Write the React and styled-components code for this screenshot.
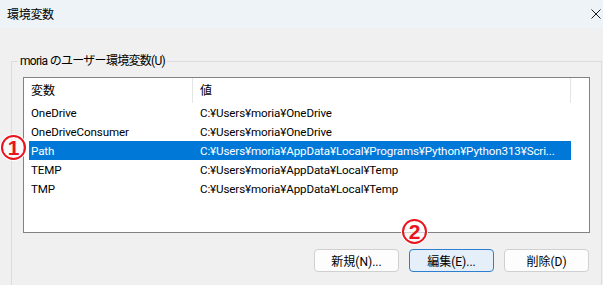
import styled, { createGlobalStyle } from 'styled-components'

const GlobalStyle = createGlobalStyle`
  html, body {
    margin: 0;
    padding: 0;
    background: #f0f0f0;
    overflow: hidden;
  }
  body {
    font-family: Roboto, "Noto Sans CJK JP", sans-serif;
    font-size: 12px;
    color: #000;
  }
`

const vars = [
    { name: 'OneDrive', value: 'C:¥Users¥moria¥OneDrive' },
    { name: 'OneDriveConsumer', value: 'C:¥Users¥moria¥OneDrive' },
    { name: 'Path', value: 'C:¥Users¥moria¥AppData¥Local¥Programs¥Python¥Python313¥Scri...', selected: true },
    { name: 'TEMP', value: 'C:¥Users¥moria¥AppData¥Local¥Temp' },
    { name: 'TMP', value: 'C:¥Users¥moria¥AppData¥Local¥Temp' },
]

const App = () => {
    return (
        <>
            <GlobalStyle />
            <Window>
                <TitleBar>
                    <Title>環境変数</Title>
                    <CloseIcon width="10" height="10" viewBox="0 0 10 10">
                        <path d="M0.5 0.5 L9.5 9.5 M9.5 0.5 L0.5 9.5" stroke="#1a1a1a" strokeWidth="1" />
                    </CloseIcon>
                </TitleBar>
                <Body>
                    <GroupBox>
                        <Legend>moria のユーザー環境変数(U)</Legend>
                        <ListBox>
                            <HeaderRow>
                                <HeaderCell>変数</HeaderCell>
                                <HeaderCell $value>値</HeaderCell>
                            </HeaderRow>
                            {vars.map((v) => (
                                <Row key={v.name} $selected={v.selected}>
                                    <Cell>{v.name}</Cell>
                                    <Cell $value>{v.value}</Cell>
                                </Row>
                            ))}
                        </ListBox>
                        <ButtonRow>
                            <Button>新規(N)...</Button>
                            <Button $default>編集(E)...</Button>
                            <Button>削除(D)</Button>
                        </ButtonRow>
                    </GroupBox>
                </Body>
                <Marker style={{ left: 1, top: 135 }}>1</Marker>
                <Marker style={{ left: 402, top: 219 }}>2</Marker>
            </Window>
        </>
    )
}

export default App

const Window = styled.div`
    position: relative;
    width: 603px;
    height: 285px;
    overflow: hidden;
    background: #f0f0f0;
`

const TitleBar = styled.div`
    height: 28px;
    display: flex;
    align-items: center;
    justify-content: space-between;
    padding: 0 2px 0 7px;
    background: #eef3f8;
`

const Title = styled.span`
    font-size: 12px;
    line-height: 16px;
    margin-top: 2px;
    letter-spacing: -0.3px;
`

const CloseIcon = styled.svg`
    display: block;
    margin-top: -1px;
`

const Body = styled.div`
    padding: 25px 0 0 11px;
`

const GroupBox = styled.fieldset`
    box-sizing: border-box;
    width: 591px;
    height: 260px;
    margin: 0;
    border: 1px solid #dcdcdc;
    padding: 8px 12px 0 11px;
    min-inline-size: 0;
`

const Legend = styled.legend`
    padding: 0 2px;
    margin-left: -5px;
    line-height: 16px;
    font-size: 12px;
    letter-spacing: -0.7px;
`

const ListBox = styled.div`
    box-sizing: border-box;
    width: 567px;
    height: 156px;
    border: 1px solid #828282;
    background: #fff;
    padding-left: 5px;
`

const HeaderRow = styled.div`
    display: grid;
    grid-template-columns: 164px 378px;
    width: 542px;
    height: 25px;
`

const HeaderCell = styled.div`
    display: flex;
    align-items: center;
    padding-left: ${(p) => (p.$value ? '7px' : '2px')};
    border-right: 1px solid #e5e5e5;
    line-height: 16px;
`

const Row = styled.div`
    display: grid;
    grid-template-columns: 164px 378px;
    width: 542px;
    height: 19px;
    align-items: center;
    background: ${(p) => (p.$selected ? '#0078d7' : 'transparent')};
    color: ${(p) => (p.$selected ? '#fff' : '#000')};
`

const Cell = styled.div`
    padding-left: ${(p) => (p.$value ? '7px' : '2px')};
    white-space: nowrap;
    overflow: hidden;
    line-height: 16px;
    font-size: 11.6px;
    letter-spacing: -0.12px;
`

const ButtonRow = styled.div`
    display: flex;
    justify-content: flex-end;
    gap: 10px;
    margin-top: 16px;
    width: 566px;
`

const Button = styled.button`
    box-sizing: border-box;
    width: 85px;
    height: 23px;
    border-radius: 4px;
    border: 1px solid ${(p) => (p.$default ? '#2f7fd0' : '#d0d0d0')};
    background: ${(p) => (p.$default ? '#e4eff9' : '#fdfdfd')};
    font-family: Roboto, "Noto Sans CJK JP", sans-serif;
    font-size: 12px;
    color: #000;
    padding: 0;
`

const Marker = styled.div`
    position: absolute;
    box-sizing: border-box;
    width: 25px;
    height: 25px;
    border-radius: 50%;
    border: 2px solid #e8141e;
    box-shadow: 0 0 0 1px #fff;
    background: rgba(255, 255, 255, 0.6);
    color: #e8141e;
    font-family: "Liberation Sans", sans-serif;
    font-weight: bold;
    font-size: 21px;
    line-height: 21px;
    text-align: center;
    text-shadow: 0 0 1px #fff;
`
